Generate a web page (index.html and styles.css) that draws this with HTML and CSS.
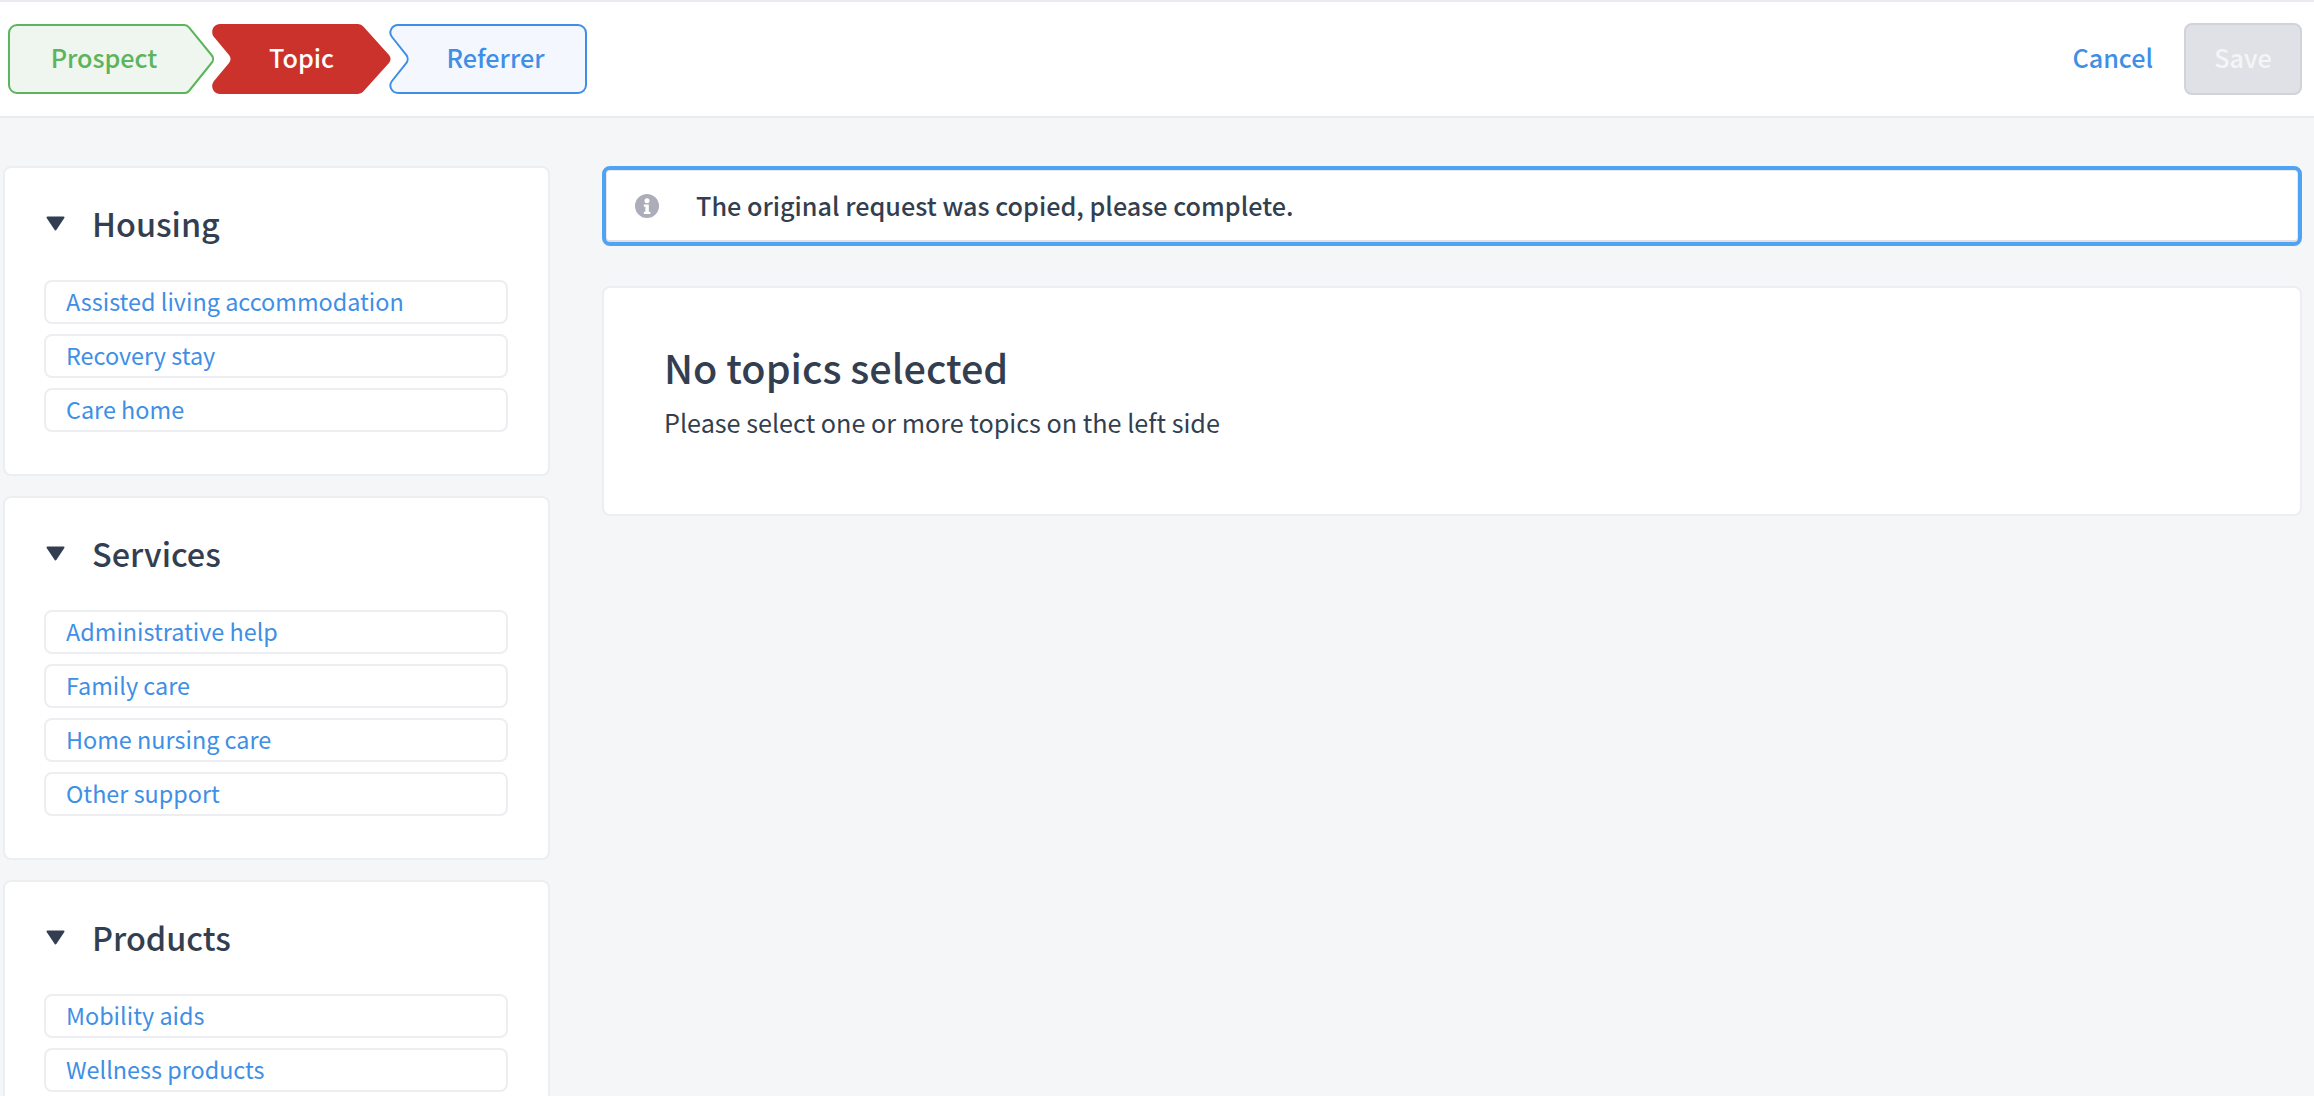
FILE: index.html
```html
<!DOCTYPE html>
<html lang="en">
<head>
<meta charset="utf-8">
<title>Request</title>
<link rel="stylesheet" href="styles.css">
</head>
<body>
<header class="topbar">
  <nav class="steps">
    <a class="step step-prospect">
      <svg class="step-shape" viewBox="0 0 206 70" aria-hidden="true"><path d="M9 1H176a6 6 0 0 1 5 2.500L203.500 31a6 6 0 0 1 0 8L181 67a6 6 0 0 1-5 2H9a8 8 0 0 1-8-8V9a8 8 0 0 1 8-8Z" fill="#eff6ef" stroke="#5cb45c" stroke-width="2"/></svg>
      <span class="step-label">Prospect</span>
    </a>
    <a class="step step-topic">
      <svg class="step-shape" viewBox="0 0 179 70" aria-hidden="true"><path d="M8 0H146a7 7 0 0 1 5.500 2.700L177 31a6.500 6.500 0 0 1 0 8L151.500 67.300a7 7 0 0 1-5.500 2.700H8C1 70-2 62 2 57L17 39a6.500 6.500 0 0 0 0-8L2 13C-2 8 1 0 8 0Z" fill="#cb322b"/></svg>
      <span class="step-label">Topic</span>
    </a>
    <a class="step step-referrer">
      <svg class="step-shape" viewBox="0 0 198 70" aria-hidden="true"><path d="M9 1H189a8 8 0 0 1 8 8V61a8 8 0 0 1-8 8H9C3 69-1 62 3 57L17 39.500a7 7 0 0 0 0-9L3 13C-1 8 3 1 9 1Z" fill="#f4f8fe" stroke="#3f8fe6" stroke-width="2"/></svg>
      <span class="step-label">Referrer</span>
    </a>
  </nav>
  <div class="actions">
    <a class="cancel">Cancel</a>
    <button class="save" type="button">Save</button>
  </div>
</header>
<div class="layout">
  <aside class="sidebar">
    <section class="card group">
      <h2 class="group-title"><svg class="caret" viewBox="0 0 19 15" aria-hidden="true"><path d="M1.500 1.500H17.500L9.500 13.500Z"/></svg>Housing</h2>
      <ul class="topic-list">
        <li class="topic">Assisted living accommodation</li>
        <li class="topic">Recovery stay</li>
        <li class="topic">Care home</li>
      </ul>
    </section>
    <section class="card group">
      <h2 class="group-title"><svg class="caret" viewBox="0 0 19 15" aria-hidden="true"><path d="M1.500 1.500H17.500L9.500 13.500Z"/></svg>Services</h2>
      <ul class="topic-list">
        <li class="topic">Administrative help</li>
        <li class="topic">Family care</li>
        <li class="topic">Home nursing care</li>
        <li class="topic">Other support</li>
      </ul>
    </section>
    <section class="card group">
      <h2 class="group-title"><svg class="caret" viewBox="0 0 19 15" aria-hidden="true"><path d="M1.500 1.500H17.500L9.500 13.500Z"/></svg>Products</h2>
      <ul class="topic-list">
        <li class="topic">Mobility aids</li>
        <li class="topic">Wellness products</li>
      </ul>
    </section>
  </aside>
  <main class="content">
    <div class="alert">
      <svg class="info" viewBox="0 0 24 24" aria-hidden="true"><path fill-rule="evenodd" d="M12 0a12 12 0 1 1 0 24a12 12 0 0 1 0-24ZM12 4.200a2.500 2.500 0 1 0 0 5a2.500 2.500 0 0 0 0-5ZM8.800 10.500v2.300h1.600v5H8.800v2.200h6.600v-2.200h-1.600v-7.300Z" fill="#abaeb8"/></svg>
      <span class="alert-text">The original request was copied, please complete.</span>
    </div>
    <section class="card empty">
      <h1 class="empty-title">No topics selected</h1>
      <p class="empty-text">Please select one or more topics on the left side</p>
    </section>
  </main>
</div>
</body>
</html>
```
FILE: styles.css
```css
* { box-sizing: border-box; }
html, body { height: 100%; }
body {
  margin: 0;
  overflow: hidden;
  background: #f5f6f8;
  color: #333f50;
  font-family: "Noto Sans CJK SC", "Noto Sans", sans-serif;
  font-size: 25.2px;
}
.topbar {
  height: 118px;
  display: flex;
  align-items: center;
  justify-content: space-between;
  padding: 0 12px 0 8px;
  background: #fff;
  border-top: 2px solid #e8ebef;
  border-bottom: 2px solid #e8ebef;
}
.steps { display: flex; margin-top: -1px; }
.step {
  position: relative;
  height: 70px;
  display: flex;
  align-items: center;
  justify-content: center;
  font-weight: 500;
}
.step-shape { position: absolute; inset: 0; width: 100%; height: 100%; }
.step-label { position: relative; padding-bottom: 3px; }
.step-prospect { width: 206px; color: #5cb45c; padding-right: 14px; }
.step-topic { width: 179px; margin-left: -2px; color: #fff; }
.step-referrer { width: 198px; margin-left: -2px; color: #3f8fe6; padding-left: 15px; }
.actions { display: flex; align-items: center; gap: 31px; margin-top: -1px; }
.cancel { color: #3f8fe6; font-weight: 500; padding-bottom: 4px; }
.save {
  width: 118px;
  height: 72px;
  padding: 0 0 3px;
  border: 2px solid #d2d3d9;
  border-radius: 8px;
  background: #e0e1e6;
  color: #f4f5f7;
  font: inherit;
  font-weight: 500;
}
.layout {
  display: flex;
  align-items: flex-start;
  gap: 53px;
  padding: 48px 12px 0 3px;
}
.sidebar { width: 547px; flex: none; display: flex; flex-direction: column; gap: 20px; }
.content { flex: 1; display: flex; flex-direction: column; gap: 40px; }
.card {
  background: #fff;
  border: 2px solid #eceef2;
  border-radius: 8px;
}
.group { padding: 30px 40px 42px 39px; }
.group-title {
  display: flex;
  align-items: center;
  gap: 27px;
  margin: 0 0 32px;
  padding-left: 2px;
  font-size: 32.4px;
  font-weight: 500;
  line-height: 50px;
}
.caret { width: 19px; height: 15px; flex: none; }
.caret path { fill: #333f50; stroke: #333f50; stroke-width: 2; stroke-linejoin: round; }
.topic-list { list-style: none; margin: 0; padding: 0; display: flex; flex-direction: column; gap: 10px; }
.topic {
  height: 44px;
  padding-left: 20px;
  border: 2px solid #eceef2;
  border-radius: 8px;
  color: #3f8fe6;
  font-size: 23.4px;
  line-height: 38px;
}
.alert {
  height: 80px;
  margin-left: -1px;
  display: flex;
  align-items: center;
  gap: 37px;
  padding-left: 29px;
  background: #fff;
  border: 4px solid #4fa3f2;
  border-radius: 8px;
  box-shadow: inset 0 -2px 0 #dfe0e4, inset 0 0 0 1px #e8e9ec;
  font-weight: 500;
}
.alert-text { padding-bottom: 3px; }
.info { width: 24px; height: 24px; flex: none; }
.empty { height: 230px; margin-left: -1px; padding: 51px 60px 0; }
.empty-title { margin: 0; font-size: 39.6px; font-weight: 500; line-height: 56px; }
.empty-text { margin: 8px 0 0; line-height: 38px; }
```
